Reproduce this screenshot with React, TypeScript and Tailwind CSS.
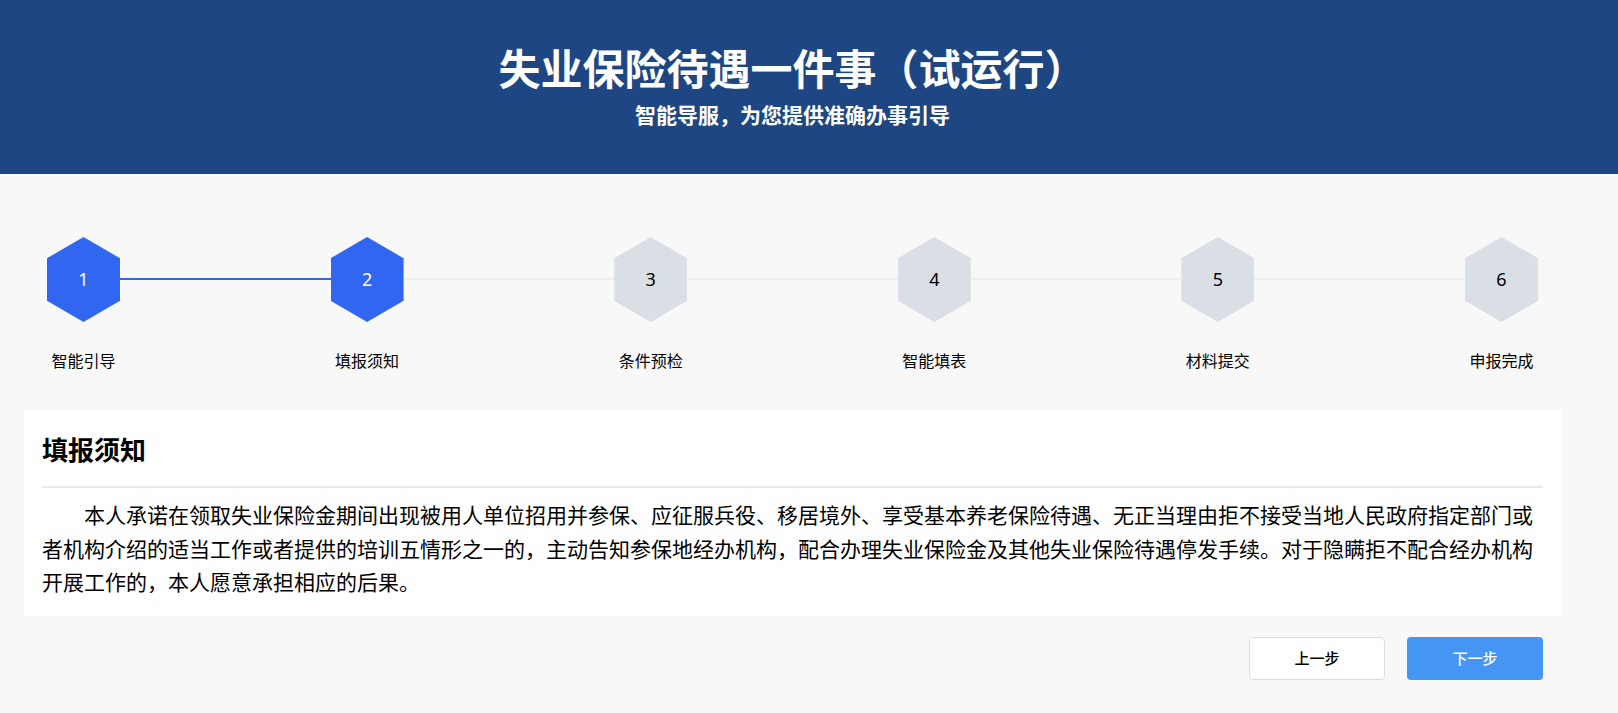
import React from 'react';

interface Step {
  id: number;
  label: string;
}

const STEPS: Step[] = [
  { id: 1, label: '智能引导' },
  { id: 2, label: '填报须知' },
  { id: 3, label: '条件预检' },
  { id: 4, label: '智能填表' },
  { id: 5, label: '材料提交' },
  { id: 6, label: '申报完成' },
];

const CURRENT_STEP = 2;

const Hexagon: React.FC<{ num: number; active: boolean }> = ({ num, active }) => (
  <div
    className={`w-[73px] h-[85px] flex items-center justify-center text-[18px] ${
      active ? 'bg-[#3167f0] text-white' : 'bg-[#dadfe6] text-black'
    }`}
    style={{
      clipPath: 'polygon(50% 0, 100% 25%, 100% 75%, 50% 100%, 0 75%, 0 25%)',
      fontFamily: '"Noto Sans", "Open Sans", sans-serif',
    }}
  >
    {num}
  </div>
);

const App: React.FC = () => {
  return (
    <div
      className="min-h-screen bg-[#f8f8f8]"
      style={{ fontFamily: '"Noto Sans CJK SC", "Noto Sans", sans-serif' }}
    >
      <div className="bg-[#1e4682] h-[174px]">
        <div className="w-[1585px] flex flex-col items-center pt-[40px]">
          <h1 className="text-[42px] leading-[54px] font-bold text-white">
            失业保险待遇一件事（试运行）
          </h1>
          <p className="text-[21px] leading-[28px] font-bold text-white mt-[6px]">
            智能导服，为您提供准确办事引导
          </p>
        </div>
      </div>

      <div className="w-[1585px] px-[24px]">
        <div className="flex px-[23px] pt-[63px] pb-[39px]">
          {STEPS.map((step, idx) => (
            <React.Fragment key={step.id}>
              <div className="w-[73px] flex flex-col items-center shrink-0">
                <Hexagon num={step.id} active={step.id <= CURRENT_STEP} />
                <span className="mt-[26px] text-[16px] leading-[24px] text-black whitespace-nowrap">
                  {step.label}
                </span>
              </div>
              {idx < STEPS.length - 1 && (
                <div
                  className={`flex-1 h-[2px] mt-[41px] ${
                    step.id < CURRENT_STEP ? 'bg-[#3167f0]' : 'bg-[#eeeded]'
                  }`}
                />
              )}
            </React.Fragment>
          ))}
        </div>

        <div className="bg-white px-[18px] pt-[22px] pb-[17px]">
          <h2 className="text-[26px] leading-[32px] font-bold text-black">填报须知</h2>
          <div className="mt-[21px] h-[2px] bg-[#ece8e9]" />
          <p className="mt-[10px] text-[21px] leading-[33.5px] text-black indent-[2em]">
            本人承诺在领取失业保险金期间出现被用人单位招用并参保、应征服兵役、移居境外、享受基本养老保险待遇、无正当理由拒不接受当地人民政府指定部门或者机构介绍的适当工作或者提供的培训五情形之一的，主动告知参保地经办机构，配合办理失业保险金及其他失业保险待遇停发手续。对于隐瞒拒不配合经办机构开展工作的，本人愿意承担相应的后果。
          </p>
        </div>

        <div className="flex justify-end gap-[22px] pr-[18px] mt-[21px]">
          <button className="w-[136px] h-[43px] bg-white border border-[#e3d9dc] rounded-[4px] text-[15px] font-medium text-black">
            上一步
          </button>
          <button className="w-[136px] h-[43px] bg-[#4595f5] rounded-[4px] text-[15px] font-medium text-white">
            下一步
          </button>
        </div>
      </div>
    </div>
  );
};

export default App;
